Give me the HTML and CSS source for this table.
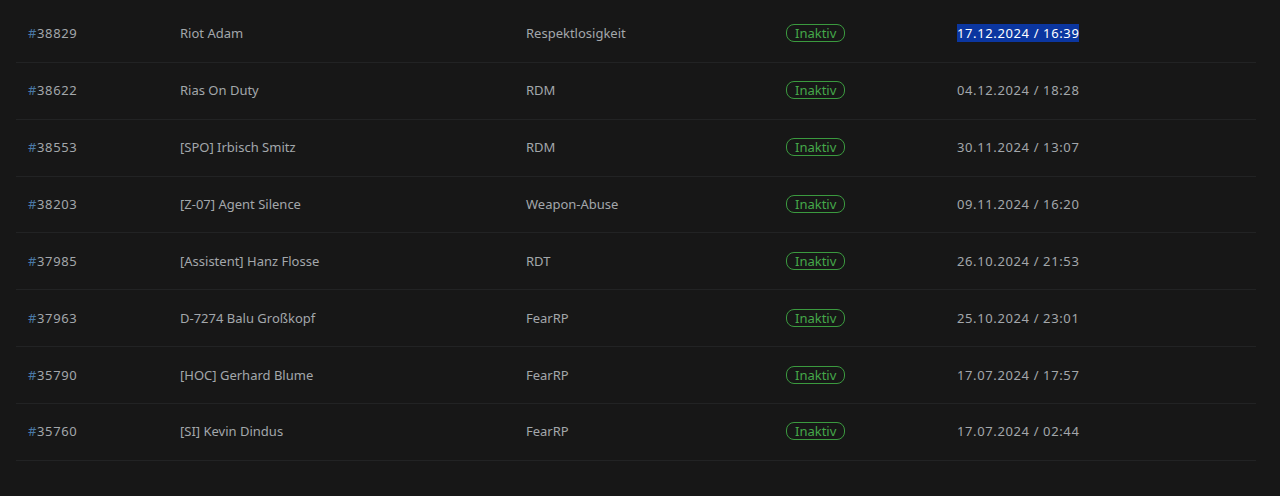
FILE: index.html
```html
<!DOCTYPE html>
<html lang="de">
<head>
<meta charset="utf-8">
<link rel="stylesheet" href="styles.css">
</head>
<body>
<div class="table">
  <div class="row"><div class="cell num"><span class="hash">#</span>38829</div><div class="cell">Riot Adam</div><div class="cell">Respektlosigkeit</div><div class="cell"><span class="badge">Inaktiv</span></div><div class="cell num"><span class="sel">17.12.2024 / 16:39</span></div></div>
  <div class="row"><div class="cell num"><span class="hash">#</span>38622</div><div class="cell">Rias On Duty</div><div class="cell">RDM</div><div class="cell"><span class="badge">Inaktiv</span></div><div class="cell num">04.12.2024 / 18:28</div></div>
  <div class="row"><div class="cell num"><span class="hash">#</span>38553</div><div class="cell">[SPO] Irbisch Smitz</div><div class="cell">RDM</div><div class="cell"><span class="badge">Inaktiv</span></div><div class="cell num">30.11.2024 / 13:07</div></div>
  <div class="row"><div class="cell num"><span class="hash">#</span>38203</div><div class="cell">[Z-07] Agent Silence</div><div class="cell">Weapon-Abuse</div><div class="cell"><span class="badge">Inaktiv</span></div><div class="cell num">09.11.2024 / 16:20</div></div>
  <div class="row"><div class="cell num"><span class="hash">#</span>37985</div><div class="cell">[Assistent] Hanz Flosse</div><div class="cell">RDT</div><div class="cell"><span class="badge">Inaktiv</span></div><div class="cell num">26.10.2024 / 21:53</div></div>
  <div class="row"><div class="cell num"><span class="hash">#</span>37963</div><div class="cell">D-7274 Balu Großkopf</div><div class="cell">FearRP</div><div class="cell"><span class="badge">Inaktiv</span></div><div class="cell num">25.10.2024 / 23:01</div></div>
  <div class="row"><div class="cell num"><span class="hash">#</span>35790</div><div class="cell">[HOC] Gerhard Blume</div><div class="cell">FearRP</div><div class="cell"><span class="badge">Inaktiv</span></div><div class="cell num">17.07.2024 / 17:57</div></div>
  <div class="row"><div class="cell num"><span class="hash">#</span>35760</div><div class="cell">[SI] Kevin Dindus</div><div class="cell">FearRP</div><div class="cell"><span class="badge">Inaktiv</span></div><div class="cell num">17.07.2024 / 02:44</div></div>
</div>
</body>
</html>
```
FILE: styles.css
```css
html, body {
  margin: 0;
  background: #171717;
}
body {
  padding: 6px 24px 0 16px;
  font-family: "Noto Sans", "Open Sans", sans-serif;
  font-size: 13px;
  color: #a3a7ab;
}
.table {
  display: flex;
  flex-direction: column;
}
.row {
  display: grid;
  grid-template-columns: 152px 346px 260px 171px 1fr;
  height: 54.86px;
  padding-bottom: 1px;
  align-items: center;
  border-bottom: 1px solid #222324;
}
.cell {
  padding: 0 12px;
  white-space: nowrap;
}
.num {
  letter-spacing: 0.62px;
}
.hash {
  color: #4a79a6;
}
.badge {
  display: inline-block;
  border: 1px solid #3b9a3f;
  color: #45a84a;
  border-radius: 8px;
  padding: 0 8px;
  line-height: 16px;
}
.sel {
  background: #0b36a0;
  color: #ffffff;
}
```
